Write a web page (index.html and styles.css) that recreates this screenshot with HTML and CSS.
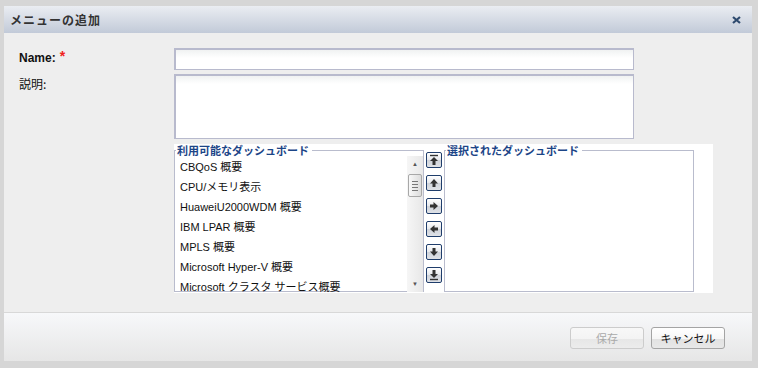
FILE: index.html
```html
<!DOCTYPE html>
<html lang="ja">
<head>
    <meta charset="UTF-8">
    <title>メニューの追加</title>
    <link rel="stylesheet" href="styles.css">
</head>
<body>
    <div class="dialog">
        <div class="dialog-title">
            <span>メニューの追加</span>
            <svg class="close" width="9" height="8" viewBox="0 0 9 8"><path d="M1 1l7 6M8 1L1 7" stroke="#2e4a6e" stroke-width="2.2" fill="none"/></svg>
        </div>

        <div class="dialog-body">
            <div class="form-row">
                <label class="form-label name-label">Name:<span class="req">*</span></label>
                <input class="text-input" type="text">
            </div>
            <div class="form-row">
                <label class="form-label">説明:</label>
                <textarea class="text-area"></textarea>
            </div>

            <div class="dual-list">
                <fieldset class="list-box">
                    <legend>利用可能なダッシュボード</legend>
                    <div class="list-inner">
                        <ul class="items">
                            <li>CBQoS 概要</li>
                            <li>CPU/メモリ表示</li>
                            <li>HuaweiU2000WDM 概要</li>
                            <li>IBM LPAR 概要</li>
                            <li>MPLS 概要</li>
                            <li>Microsoft Hyper-V 概要</li>
                            <li>Microsoft クラスタ サービス概要</li>
                        </ul>
                        <div class="scrollbar">
                            <div class="sb-arrow">&#9650;</div>
                            <div class="sb-track">
                                <div class="sb-thumb"><span></span><span></span><span></span><span></span></div>
                            </div>
                            <div class="sb-arrow">&#9660;</div>
                        </div>
                    </div>
                </fieldset>

                <div class="move-buttons">
                    <button class="move-btn" title="top">
                        <svg width="12" height="12" viewBox="0 0 12 12"><path d="M2 1.5h8" stroke="#333" stroke-width="1.4" fill="none"/><path d="M6 3L2 7h2.5v4h3V7H10z" fill="#333"/></svg>
                    </button>
                    <button class="move-btn" title="up">
                        <svg width="12" height="12" viewBox="0 0 12 12"><path d="M6 2L2 6.5h2.5V10h3V6.5H10z" fill="#333"/></svg>
                    </button>
                    <button class="move-btn" title="add">
                        <svg width="12" height="12" viewBox="0 0 12 12"><path d="M10 6L5.5 2v2.5H2v3h3.5V10z" fill="#333"/></svg>
                    </button>
                    <button class="move-btn" title="remove">
                        <svg width="12" height="12" viewBox="0 0 12 12"><path d="M2 6l4.5-4v2.5H10v3H6.5V10z" fill="#333"/></svg>
                    </button>
                    <button class="move-btn" title="down">
                        <svg width="12" height="12" viewBox="0 0 12 12"><path d="M6 10L2 5.5h2.5V2h3v3.5H10z" fill="#333"/></svg>
                    </button>
                    <button class="move-btn" title="bottom">
                        <svg width="12" height="12" viewBox="0 0 12 12"><path d="M6 9L2 5h2.5V1h3v4H10z" fill="#333"/><path d="M2 10.5h8" stroke="#333" stroke-width="1.4" fill="none"/></svg>
                    </button>
                </div>

                <fieldset class="list-box selected-box">
                    <legend>選択されたダッシュボード</legend>
                </fieldset>
            </div>
        </div>

        <div class="dialog-footer">
            <button class="btn" disabled>保存</button>
            <button class="btn">キャンセル</button>
        </div>
    </div>
</body>
</html>
```

FILE: styles.css
```css
body {
    margin: 0;
    padding: 6px 0 0 4px;
    background-color: #d6d6d6;
    font-family: 'Liberation Sans', 'Noto Sans CJK JP', sans-serif;
    font-size: 12px;
    color: #222;
}

.dialog {
    width: 748px;
    height: 355px;
    background-color: #eeeeee;
    display: flex;
    flex-direction: column;
}

.dialog-title {
    height: 27px;
    padding: 0 11px 0 6px;
    display: flex;
    align-items: center;
    justify-content: space-between;
    background: linear-gradient(#eaedf2, #c2cad8);
    font-family: 'Noto Sans CJK JP', sans-serif;
    font-weight: bold;
    font-size: 12px;
    letter-spacing: 1px;
    color: #333;
}

.dialog-body {
    height: 280px;
    padding: 15px 0 0 15px;
    box-sizing: border-box;
    border-bottom: 1px solid #d8d8d8;
}

.form-row {
    display: flex;
    margin-bottom: 4px;
}

.form-label {
    width: 155px;
    font-family: 'Noto Sans CJK JP', sans-serif;
    font-size: 12px;
    line-height: 20px;
    color: #111;
}

.name-label {
    font-family: 'Liberation Sans', sans-serif;
    font-weight: bold;
}

.req {
    color: #f02020;
    margin-left: 4px;
    font-weight: bold;
    font-size: 14px;
    vertical-align: top;
    line-height: 16px;
}

.text-input,
.text-area {
    width: 460px;
    box-sizing: border-box;
    border: 1px solid #b8bacd;
    border-width: 2px 1px 1px 2px;
    background: linear-gradient(#f0f2f2, #ffffff 8px);
    margin: 0;
    padding: 2px 4px;
    font-family: inherit;
    outline: none;
}

.text-input {
    height: 22px;
}

.text-area {
    height: 65px;
    resize: none;
}

.dual-list {
    margin: 5px 0 0 155px;
    width: 539px;
    height: 149px;
    background-color: #ffffff;
    display: flex;
    align-items: flex-start;
}

.list-box {
    width: 250px;
    height: 148px;
    box-sizing: border-box;
    margin: -6px 0 0 0;
    padding: 0;
    border: 1px solid #b9bccd;
    min-width: 0;
    position: relative;
    top: 6px;
}

.list-box legend {
    padding: 0 3px 0 1px;
    margin-left: 1px;
    font-family: 'Noto Sans CJK JP', sans-serif;
    font-weight: bold;
    font-size: 11px;
    line-height: 12px;
    color: #1c4587;
}

.list-inner {
    display: flex;
    height: 136px;
}

.items {
    list-style: none;
    margin: 0;
    padding: 1px 0 0 5px;
    flex: 1;
    overflow: hidden;
}

.items li {
    height: 20px;
    line-height: 20px;
    font-size: 11px;
    white-space: nowrap;
    color: #111;
}

.scrollbar {
    width: 16px;
    display: flex;
    flex-direction: column;
    background: linear-gradient(90deg, #f6f6f6, #e8e8e8);
}

.sb-arrow {
    height: 16px;
    font-size: 6px;
    line-height: 16px;
    text-align: center;
    color: #555;
}

.sb-track {
    flex: 1;
    padding-top: 2px;
}

.sb-thumb {
    height: 23px;
    margin: 0 1px;
    box-sizing: border-box;
    border: 1px solid #a8a8a8;
    border-radius: 2px;
    background: linear-gradient(90deg, #f8f8f8, #dcdcdc);
    display: flex;
    flex-direction: column;
    justify-content: center;
    gap: 2px;
    padding: 0 3px;
}

.sb-thumb span {
    height: 1px;
    background-color: #777;
}

.move-buttons {
    width: 16px;
    margin: 8px 2px 0 2px;
    display: flex;
    flex-direction: column;
    gap: 7px;
}

.move-btn {
    width: 16px;
    height: 16px;
    padding: 0;
    border: 1px solid #1f3d6b;
    border-radius: 2px;
    background: linear-gradient(#ffffff, #e6e8ec 50%, #cfd3da 50%, #dfe2e7);
    display: flex;
    align-items: center;
    justify-content: center;
}

.selected-box {
    width: 250px;
}

.dialog-footer {
    flex: 1;
    display: flex;
    justify-content: flex-end;
    align-items: flex-start;
    gap: 7px;
    padding: 14px 27px 0 0;
    background: linear-gradient(#f7f8fa, #e6e6e6);
}

.btn {
    width: 74px;
    height: 22px;
    border: 1px solid #a4a4a4;
    border-radius: 3px;
    background: linear-gradient(#ffffff, #f6f6f6 55%, #e2e2e2 55%, #e8e8e8);
    font-family: 'Noto Sans CJK JP', sans-serif;
    font-size: 11px;
    color: #111;
    padding: 0;
}

.btn:disabled {
    border-color: #cccccc;
    color: #aaaaaa;
    background: linear-gradient(#f8f8f8, #f3f3f3 55%, #e7e7e7 55%, #ececec);
}
```
